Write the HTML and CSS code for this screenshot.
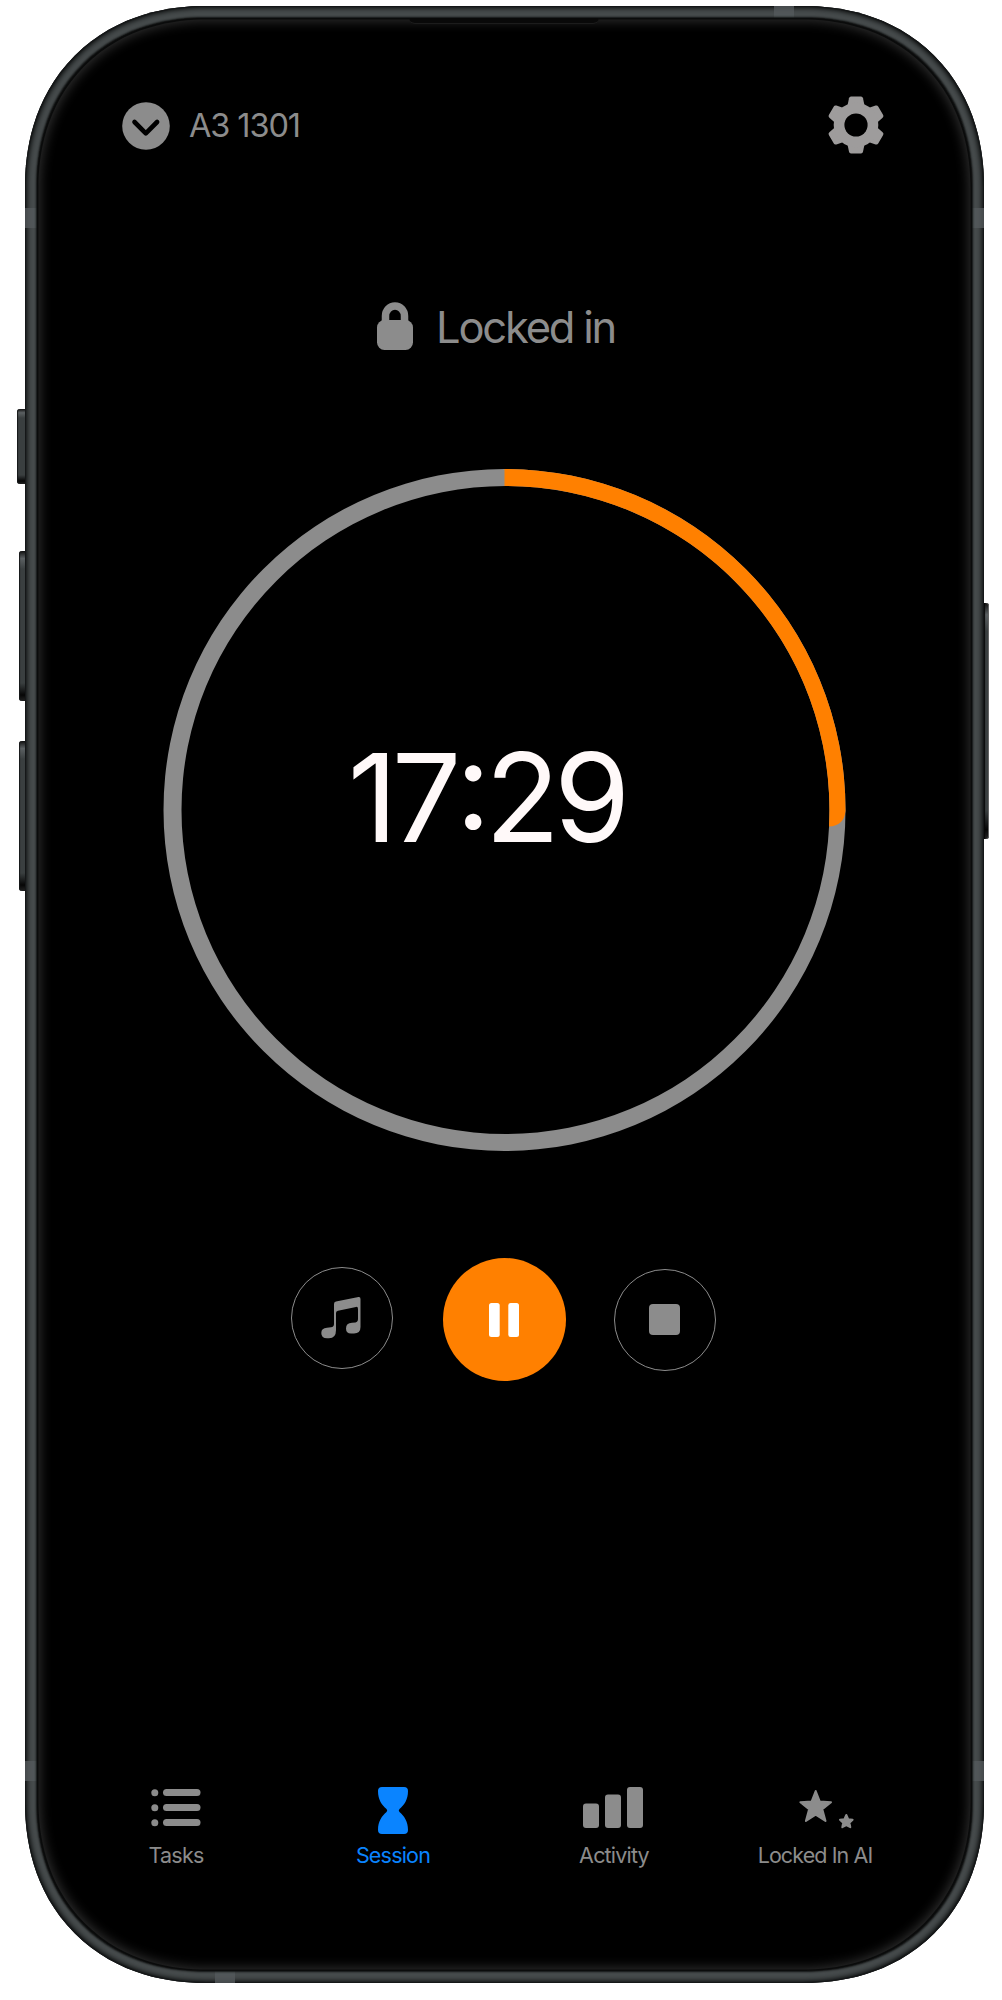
FILE: index.html
```html
<!DOCTYPE html>
<html lang="en">
<head>
<meta charset="utf-8">
<title>Session</title>
<link rel="stylesheet" href="styles.css">
</head>
<body>
<div class="phone">
  <i class="key key-action"></i><i class="key key-up"></i><i class="key key-down"></i><i class="key key-power"></i>
  <div class="chassis">
    <i class="band band-tl"></i><i class="band band-tr"></i><i class="band band-bl"></i><i class="band band-br"></i><i class="band band-top"></i><i class="band band-bottom"></i>
    <main class="screen">
      <i class="speaker"></i>
      <header class="topbar">
        <div class="room">
          <svg width="48" height="48" viewBox="0 0 48 48"><circle cx="24" cy="24" r="23.8" fill="#8c8c8c"/><path d="M12.5 20 23.8 31.3 35.1 20" fill="none" stroke="#000" stroke-width="4.6" stroke-linecap="round" stroke-linejoin="round"/></svg>
          <span class="room-name">A3 1301</span>
        </div>
        <svg class="gear" width="56" height="58" viewBox="0 0 56 58"><g fill="#9e9c9c"><path id="tooth" d="M21 2.3Q21.400.5 23 .5H33Q34.600.5 35 2.300L37 12V29H19V12Z"/><use href="#tooth" transform="rotate(60 28 29)"/><use href="#tooth" transform="rotate(120 28 29)"/><use href="#tooth" transform="rotate(180 28 29)"/><use href="#tooth" transform="rotate(240 28 29)"/><use href="#tooth" transform="rotate(300 28 29)"/><circle cx="28" cy="29" r="22.300"/></g><circle cx="28" cy="29" r="11.600"/></svg>
      </header>
      <div class="status">
        <svg width="38" height="49" viewBox="0 0 38 49"><path d="M9.500 22V14a9.500 10 0 0 1 19 0V22" fill="none" stroke="#8c8c8c" stroke-width="7.500"/><rect x="1" y="18" width="36" height="30" rx="7.500" fill="#8c8c8c"/></svg>
        <span class="status-text">Locked in</span>
      </div>
      <section class="timer">
        <svg class="ring" width="684" height="684" viewBox="0 0 684 684"><path fill="#8c8c8c" fill-rule="evenodd" d="M.5 342a341 341 0 1 1 682 0a341 341 0 1 1-682 0ZM18.500 342a324 324 0 1 0 648 0a324 324 0 1 0-648 0Z"/><path fill="#ff8000" d="M341.500 1A341 341 0 0 1 682.500 343Q681 358 666 358.500A324 324 0 0 0 341.500 18Z"/></svg>
        <span class="time">17:29</span>
      </section>
      <section class="controls">
        <button class="round music"><svg width="40" height="42" viewBox="0 0 40 42"><path fill="#8c8c8c" d="M13 7Q13 5 15 4.600L37.500.1Q39.500-.2 39.500 2V30Q39.500 36.500 33 36.500H30Q25 36.500 25 31.500Q25 26 31 25.800L34.500 25.400Q37 25 37 22V12Q37 9.500 35 9.900L17 13.700Q15 14.200 15 16V33Q15 41.300 8 41.300H6Q.3 41.300.3 36Q.3 31 6 30.700L10 30.300Q13 30 13 27Z"/></svg></button>
        <button class="round pause"><svg width="30" height="34" viewBox="0 0 30 34" fill="#fff"><rect width="10.700" height="34" rx="2.500"/><rect x="19.300" width="10.700" height="34" rx="2.500"/></svg></button>
        <button class="round stop"><i class="stop-mark"></i></button>
      </section>
      <nav class="tabs">
        <a class="tab tasks"><svg width="50" height="50" viewBox="0 0 50 50" fill="#8c8c8c"><circle cx="3.800" cy="7.800" r="3.500"/><circle cx="3.800" cy="22.700" r="3.500"/><circle cx="3.800" cy="37.700" r="3.500"/><rect x="12" y="4" width="37.500" height="7" rx="3.500"/><rect x="12" y="19" width="37.500" height="7" rx="3.500"/><rect x="12" y="34" width="37.500" height="7" rx="3.500"/></svg><span>Tasks</span></a>
        <a class="tab session"><svg width="32" height="50" viewBox="0 0 32 50"><path fill="#0a84ff" d="M5 2H27Q31 2 31 6C31 15 27 20 22.500 24Q21 25.500 22.500 27C27 31 31 36 31 45Q31 49 27 49H5Q1 49 1 45C1 36 5 31 9.500 27Q11 25.500 9.500 24C5 20 1 15 1 6Q1 2 5 2Z"/></svg><span>Session</span></a>
        <a class="tab activity"><svg width="60" height="50" viewBox="0 0 60 50" fill="#8c8c8c"><rect y="18.500" width="16" height="24.500" rx="3"/><rect x="22" y="9.500" width="16" height="33.500" rx="3"/><rect x="44" y="2" width="16" height="41" rx="3"/></svg><span>Activity</span></a>
        <a class="tab ai"><svg width="56" height="50" viewBox="0 0 56 50" fill="#8c8c8c" stroke="#8c8c8c" stroke-width="2" stroke-linejoin="round"><path d="M17.700 6 21.800 16.600 33 17.200 24.300 24.200 27.500 36 17.700 29.600 7.900 36 11.100 24.200 2.400 17.200 13.600 16.600Z"/><path d="M48.300 30 50.200 34.200 54.600 34.700 51.400 37.800 52.300 42.200 48.300 40 44.300 42.200 45.200 37.800 42 34.700 46.400 34.200Z"/></svg><span>Locked In AI</span></a>
      </nav>
    </main>
  </div>
</div>
</body>
</html>
```
FILE: styles.css
```css
* { box-sizing: border-box; }
body { margin: 0; background: #fff; font-family: Inter, "Liberation Sans", sans-serif; color: #8c8c8c; }
svg { display: block; flex: none; }
.phone { position: relative; width: 1002px; height: 2000px; padding: 6px 18px 17px 25px; }
.chassis { position: relative; height: 1977px; padding: 12px; border-radius: 165px; background: #464b4c; box-shadow: inset 0 0 0 1px #151718, inset 0 0 5px 2px #080a0a; overflow: hidden; }
.screen { position: relative; display: flex; flex-direction: column; height: 1953px; border-radius: 153px; background: #000; box-shadow: 0 0 2px 1px #101212, inset 0 0 0 1.5px #0a0b0b, inset 0 0 12px 3px #303030; }
@supports (corner-shape: superellipse(1.1)) {
  .chassis { border-radius: 180px; corner-shape: superellipse(1.1); }
  .screen { border-radius: 168px; corner-shape: superellipse(1.1); }
}
.speaker { position: absolute; left: 372px; top: 0; width: 190px; height: 6px; border-radius: 0 0 6px 6px; background: #090909; border-bottom: 1px solid #1c1c1c; }

.key { position: absolute; border-radius: 3px 0 0 3px; background: linear-gradient(#111, #5b6062 5%, #3a3f40 12%, #3a3f40 88%, #060606 96%, #222); box-shadow: inset 1px 0 1px #151718; }
.key-action { left: 17px; top: 409px; width: 8px; height: 75px; }
.key-up { left: 19px; top: 551px; width: 6px; height: 150px; }
.key-down { left: 19px; top: 741px; width: 6px; height: 150px; }
.key-power { left: 984px; top: 603px; width: 5px; height: 236px; border-radius: 0 3px 3px 0; box-shadow: inset 1px 0 1px #080808, inset -1px 0 0 #666; }
.band { position: absolute; width: 12px; height: 20px; background: #565b5d; opacity: .75; }
.band-tl { left: 0; top: 202px; }
.band-tr { right: 0; top: 202px; }
.band-bl { left: 0; bottom: 202px; }
.band-br { right: 0; bottom: 202px; }
.band-top { left: 749px; top: 0; width: 20px; height: 12px; }
.band-bottom { left: 190px; bottom: 0; width: 20px; height: 12px; }

.topbar { display: flex; justify-content: space-between; align-items: center; margin: 79px 100px 0 85px; height: 58px; }
.room { display: flex; align-items: center; gap: 19px; }
.room-name { font-size: 32.5px; line-height: 40px; letter-spacing: -1.1px; font-weight: 385; }
.gear { margin: -2px -11.5px 0 0; }
.status { display: flex; align-items: center; gap: 22px; height: 50px; margin: 146px 0 0 339px; }
.status-text { font-size: 43.5px; line-height: 50px; letter-spacing: -2.2px; font-weight: 385; padding-top: 1px; }
.timer { display: grid; place-items: center; width: 684px; height: 684px; margin: 117px 0 0 125.500px; }
.ring, .time { grid-area: 1 / 1; }
.time { color: #fff9f9; font-size: 123px; line-height: 150px; letter-spacing: -6px; font-weight: 375; font-kerning: none; font-feature-settings: "case"; margin: -24px 37px 0 0; }
.controls { display: flex; align-items: center; height: 124px; margin: 105.5px 0 0 254px; }
.round { display: grid; place-items: center; width: 102px; height: 102px; padding: 0; border: 1px solid #8c8c8c; border-radius: 50%; background: none; }
.music { margin-top: -3px; }
.music svg { margin-left: -2px; }
.pause { width: 123px; height: 123px; margin: 0 48.5px 0 49.5px; border: 0; background: #ff8000; }
.pause svg { margin-left: -1px; }
.stop-mark { width: 31px; height: 31px; margin-left: -1px; border-radius: 4px; background: #8c8c8c; }
.tabs { display: flex; margin: 403px 0 0 89px; }
.tab { display: flex; flex-direction: column; align-items: center; gap: 6.5px; width: 100px; font-size: 21.5px; line-height: 28px; letter-spacing: -.8px; white-space: nowrap; }
.session { margin-left: 117px; color: #0a84ff; }
.activity { margin-left: 121px; }
.activity svg { margin-left: -2px; }
.ai { width: 120px; margin-left: 91px; }
.ai span { letter-spacing: -.9px; }
.ai svg { margin-left: 22px; }
```
